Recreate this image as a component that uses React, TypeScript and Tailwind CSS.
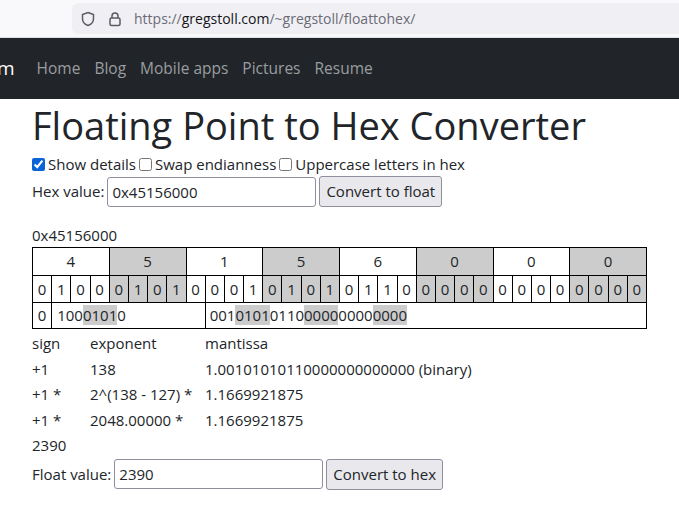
import React from "react";

const bits = "01000101000101010110000000000000".split("");
const nibbles = ["4", "5", "1", "5", "6", "0", "0", "0"];

function Shield() {
  return (
    <svg width="16" height="16" viewBox="0 0 16 16" fill="none" stroke="#5b5b66" strokeWidth="1.5">
      <path d="M8 1.5l5.5 2v4c0 3.5-2.5 6-5.5 7-3-1-5.5-3.5-5.5-7v-4z" />
    </svg>
  );
}
function Lock() {
  return (
    <svg width="16" height="16" viewBox="0 0 16 16" fill="none" stroke="#5b5b66" strokeWidth="1.5">
      <path d="M5 7V5a3 3 0 016 0v2" />
      <rect x="3" y="7" width="10" height="7.5" rx="1.5" />
    </svg>
  );
}

function Seg({ s, shade }: { s: string; shade: boolean }) {
  return <span className={shade ? "bg-[#cccccc]" : ""}>{s}</span>;
}

export default function App() {
  const font = { fontFamily: "'Open Sans', 'Noto Sans', sans-serif" };
  return (
    <div className="w-[679px] h-[518px] overflow-hidden bg-white text-[15px] text-[#212529]" style={font}>
      <div className="h-[38px] bg-[#f9f9fb] flex items-center border-b border-[#e0e0e6]">
        <div className="ml-[72px] h-[31px] flex-1 bg-[#f0f0f4] rounded-l-md flex items-center pl-[8px] gap-[11px]">
          <Shield />
          <Lock />
          <span className="text-[14px] text-[#6b6b76]">
            https://<span className="text-[#15141a]">gregstoll.com</span>/~gregstoll/floattohex/
          </span>
        </div>
      </div>
      <nav className="h-[61px] bg-[#212529] flex items-center text-[15.5px]">
        <span className="text-white text-[19px] ml-[-3px] mr-[22px]">m</span>
        <div className="flex gap-[14px] text-[#9a9da0]">
          <span>Home</span>
          <span>Blog</span>
          <span>Mobile apps</span>
          <span>Pictures</span>
          <span>Resume</span>
        </div>
      </nav>
      <div className="pl-[32px] pr-[34px]">
        <h1 className="text-[38px] leading-[50px] mt-[1px] font-normal">Floating Point to Hex Converter</h1>
        <div className="flex items-center gap-[3px] mt-[2px] h-[24px]">
          <input type="checkbox" defaultChecked className="w-[13px] h-[13px] accent-[#0a64d8]" />
          <span>Show details</span>
          <input type="checkbox" className="w-[13px] h-[13px]" />
          <span>Swap endianness</span>
          <input type="checkbox" className="w-[13px] h-[13px]" />
          <span>Uppercase letters in hex</span>
        </div>
        <div className="flex items-center gap-[3px] h-[31px]">
          <span>Hex value:</span>
          <input defaultValue="0x45156000" className="w-[209px] h-[30px] border border-[#8f8f9d] rounded-[3px] px-[4px] text-[15px]" />
          <button className="h-[31px] px-[6px] border border-[#8f8f9d] bg-[#e9e9ed] rounded-[3px]">Convert to float</button>
        </div>
        <div className="mt-[16px] h-[24px] leading-[24px]">0x45156000</div>
        <table className="border-collapse w-[615px] table-fixed">
          <tbody>
            <tr className="h-[28px]">
              {nibbles.map((n, i) => (
                <td key={i} colSpan={4} className={`border border-black text-center ${i % 2 ? "bg-[#cccccc]" : ""}`}>{n}</td>
              ))}
            </tr>
            <tr className="h-[27px]">
              {bits.map((b, i) => (
                <td key={i} className={`border border-black text-center ${Math.floor(i / 4) % 2 ? "bg-[#cccccc]" : ""}`}>{b}</td>
              ))}
            </tr>
            <tr className="h-[26px]">
              <td className="border border-black text-center">0</td>
              <td colSpan={8} className="border border-black pl-[5px] whitespace-nowrap">
                <Seg s="100" shade={false} /><Seg s="0101" shade={true} /><Seg s="0" shade={false} />
              </td>
              <td colSpan={23} className="border border-black pl-[4px] whitespace-nowrap">
                <Seg s="001" shade={false} /><Seg s="0101" shade={true} /><Seg s="0110" shade={false} /><Seg s="0000" shade={true} /><Seg s="0000" shade={false} /><Seg s="0000" shade={true} />
              </td>
            </tr>
          </tbody>
        </table>
        <div className="grid grid-cols-[58px_115px_1fr] mt-[2px] leading-[25.5px]">
          <span>sign</span><span>exponent</span><span>mantissa</span>
          <span>+1</span><span>138</span><span>1.00101010110000000000000 (binary)</span>
          <span>+1 *</span><span>2^(138 - 127) *</span><span>1.1669921875</span>
          <span>+1 *</span><span>2048.00000 *</span><span>1.1669921875</span>
        </div>
        <div className="leading-[25.5px]">2390</div>
        <div className="flex items-center gap-[3px] h-[31px]">
          <span>Float value:</span>
          <input defaultValue="2390" className="w-[209px] h-[30px] border border-[#8f8f9d] rounded-[3px] px-[4px] text-[15px]" />
          <button className="h-[31px] px-[6px] border border-[#8f8f9d] bg-[#e9e9ed] rounded-[3px]">Convert to hex</button>
        </div>
      </div>
    </div>
  );
}
